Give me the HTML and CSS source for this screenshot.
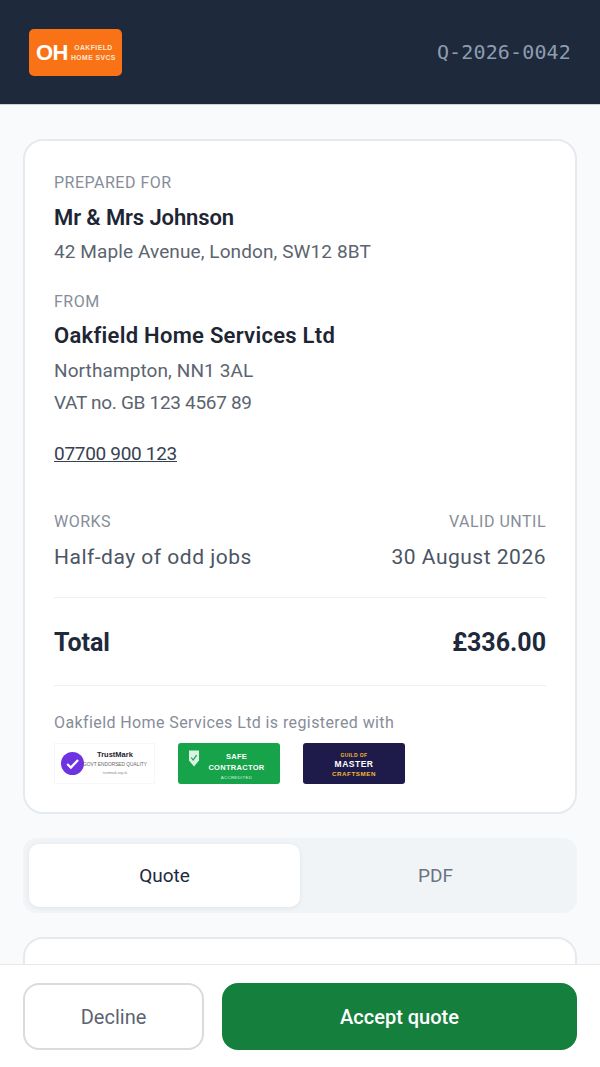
FILE: index.html
```html
<!DOCTYPE html>
<html lang="en">
<head>
  <meta charset="UTF-8" />
  <meta name="viewport" content="width=device-width, initial-scale=1.0"/>
  <title>Quote Q-2026-0042</title>
  <link rel="stylesheet" href="styles.css">
</head>
<body>

  <header class="topbar">
    <div class="logo">
      <span class="logo-mark">OH</span>
      <span class="logo-name">OAKFIELD<br>HOME SVCS</span>
    </div>
    <div class="quote-ref">Q-2026-0042</div>
  </header>

  <main class="content">
    <section class="card summary">
      <div class="label">PREPARED FOR</div>
      <div class="name">Mr &amp; Mrs Johnson</div>
      <div class="line">42 Maple Avenue, London, SW12 8BT</div>

      <div class="label from-label">FROM</div>
      <div class="name company">Oakfield Home Services Ltd</div>
      <div class="line">Northampton, NN1 3AL</div>
      <div class="line vat">VAT no. GB 123 4567 89</div>
      <a class="phone" href="tel:07700900123">07700 900 123</a>

      <div class="meta">
        <div>
          <div class="label">WORKS</div>
          <div class="meta-value">Half-day of odd jobs</div>
        </div>
        <div class="meta-right">
          <div class="label">VALID UNTIL</div>
          <div class="meta-value">30 August 2026</div>
        </div>
      </div>

      <div class="total">
        <span>Total</span>
        <span>£336.00</span>
      </div>

      <div class="registered">Oakfield Home Services Ltd is registered with</div>
      <div class="badges">
        <div class="badge trustmark">
          <svg class="tm-check" viewBox="0 0 24 24" width="23" height="23">
            <circle cx="12" cy="12" r="12" fill="#6d33e0"/>
            <path d="M6.5 12.5l3.8 3.8 7.5-8" fill="none" stroke="#fff" stroke-width="2.4"/>
          </svg>
          <div class="tm-text">
            <div class="tm-name">TrustMark</div>
            <div class="tm-sub">GOVT ENDORSED QUALITY</div>
            <div class="tm-url">trustmark.org.uk</div>
          </div>
        </div>
        <div class="badge safe">
          <svg class="safe-shield" viewBox="0 0 10 16" width="10" height="17">
            <path d="M0 0h10v10l-5 6-5-6z" fill="#d9f2e2"/>
            <path d="M2.2 7l2 2.6 3.4-5" fill="none" stroke="#16a34a" stroke-width="1.2"/>
          </svg>
          <div class="safe-text">
            <div>SAFE</div>
            <div>CONTRACTOR</div>
            <div class="safe-sub">ACCREDITED</div>
          </div>
        </div>
        <div class="badge guild">
          <div class="guild-top">GUILD OF</div>
          <div class="guild-mid">MASTER</div>
          <div class="guild-bot">CRAFTSMEN</div>
        </div>
      </div>
    </section>

    <div class="tabs">
      <button class="tab tab-active">Quote</button>
      <button class="tab">PDF</button>
    </div>

    <section class="card next-card"></section>
  </main>

  <footer class="actions">
    <button class="btn btn-decline">Decline</button>
    <button class="btn btn-accept">Accept quote</button>
  </footer>

</body>
</html>
```

FILE: styles.css
```css
* {
  box-sizing: border-box;
}

html, body {
  height: 100%;
}

body {
  margin: 0;
  display: flex;
  flex-direction: column;
  overflow: hidden;
  font-family: 'Roboto', 'Liberation Sans', sans-serif;
  background: #f8fafc;
  color: #1e293b;
}

.topbar {
  flex: none;
  height: 105px;
  padding: 0 29px;
  display: flex;
  align-items: center;
  justify-content: space-between;
  background: #1e293b;
  border-bottom: 1px solid #cbd5e1;
}

.logo {
  width: 93px;
  height: 47px;
  margin-top: 1px;
  padding-left: 7px;
  display: flex;
  align-items: center;
  gap: 3px;
  background: #f97316;
  border-radius: 5px;
  color: #fff;
  font-family: 'Liberation Sans', sans-serif;
  font-weight: bold;
}

.logo-mark {
  font-size: 22px;
  letter-spacing: -0.5px;
}

.logo-name {
  font-size: 6.8px;
  line-height: 9.5px;
  letter-spacing: 0.45px;
  text-align: center;
  color: #fde6d3;
}

.quote-ref {
  font-family: 'DejaVu Sans Mono', monospace;
  font-size: 20px;
  color: #8d9db1;
  letter-spacing: 0.15px;
}

.content {
  flex: 1;
  min-height: 0;
  overflow: hidden;
  padding: 34px 23px 0;
}

.card {
  background: #fff;
  border: 2px solid #e6e9ee;
  border-radius: 20px;
}

.summary {
  padding: 30px 29px 28px;
}

.label {
  font-size: 16px;
  line-height: 24px;
  color: #868d99;
  letter-spacing: 0.5px;
}

.from-label {
  margin-top: 23px;
}

.name {
  margin-top: 8px;
  margin-bottom: 4px;
  font-size: 22px;
  line-height: 30px;
  font-weight: 600;
  color: #1e2533;
  letter-spacing: -0.1px;
}

.company {
  margin-top: 7px;
  margin-bottom: 5px;
  letter-spacing: 0.28px;
}

.line {
  margin-top: 2px;
  font-size: 19px;
  line-height: 30px;
  color: #5b6470;
  letter-spacing: 0.1px;
}

.vat {
  letter-spacing: -0.3px;
}

.phone {
  display: block;
  margin-top: 21px;
  font-size: 19px;
  line-height: 30px;
  color: #374151;
  letter-spacing: -0.3px;
}

.meta {
  margin-top: 41px;
  padding-bottom: 26px;
  display: flex;
  justify-content: space-between;
  border-bottom: 1px solid #f0f1f4;
}

.meta-right {
  text-align: right;
}

.meta-value {
  margin-top: 9px;
  font-size: 21px;
  line-height: 28px;
  color: #4b5563;
  letter-spacing: 0.5px;
}

.total {
  height: 88px;
  padding-top: 1px;
  display: flex;
  align-items: center;
  justify-content: space-between;
  border-bottom: 1px solid #f0f1f4;
  font-size: 25px;
  font-weight: 700;
  color: #1e293b;
}

.registered {
  margin-top: 25px;
  font-size: 16px;
  line-height: 24px;
  color: #868d99;
  letter-spacing: 0.4px;
}

.badges {
  margin-top: 8px;
  display: flex;
  gap: 23px;
}

.badge {
  flex: none;
  height: 41px;
  border-radius: 3px;
  font-family: 'Liberation Sans', sans-serif;
}

.trustmark {
  width: 101px;
  padding-left: 6px;
  display: flex;
  align-items: center;
  border: 1px solid #f7f7f9;
  border-radius: 0;
}

.tm-check {
  flex: none;
}

.tm-text {
  text-align: center;
  margin-left: -1px;
}

.tm-name {
  font-size: 7.5px;
  line-height: 10px;
  font-weight: bold;
  color: #1f2430;
}

.tm-sub {
  font-size: 4.8px;
  line-height: 9px;
  color: #666;
  white-space: nowrap;
}

.tm-url {
  font-size: 3.4px;
  line-height: 8px;
  color: #888;
}

.safe {
  width: 102px;
  padding-left: 11px;
  display: flex;
  background: #16a34a;
  color: #fff;
  font-weight: bold;
}

.safe-shield {
  margin-top: 7px;
}

.safe-text {
  flex: 1;
  margin-top: 8px;
  padding-right: 6px;
  font-size: 7.5px;
  line-height: 11px;
  text-align: center;
  letter-spacing: 0.3px;
}

.safe-sub {
  font-size: 4.4px;
  line-height: 9px;
  font-weight: normal;
  color: #d9f2e2;
}

.guild {
  width: 102px;
  padding-top: 8px;
  background: #1e1b4b;
  text-align: center;
  font-weight: bold;
}

.guild-top {
  font-size: 5px;
  line-height: 8px;
  letter-spacing: 0.4px;
  color: #f5b82e;
}

.guild-mid {
  font-size: 8.5px;
  line-height: 11px;
  letter-spacing: 0.5px;
  color: #fff;
}

.guild-bot {
  font-size: 6.2px;
  line-height: 8px;
  letter-spacing: 0.6px;
  color: #f5b82e;
}

.tabs {
  margin-top: 24px;
  padding: 6px;
  height: 75px;
  display: flex;
  background: #f1f4f7;
  border-radius: 14px;
}

.tab {
  flex: 1;
  border: none;
  border-radius: 10px;
  background: transparent;
  font-family: inherit;
  font-size: 19px;
  font-weight: 400;
  color: #6b7280;
}

.tab-active {
  background: #fff;
  color: #1e293b;
  box-shadow: 0 1px 4px rgba(15, 23, 42, 0.08);
}

.next-card {
  margin-top: 24px;
  height: 200px;
}

.actions {
  flex: none;
  height: 103px;
  padding: 18px 23px 0;
  display: flex;
  gap: 18px;
  background: #fff;
  border-top: 1px solid #e5e7eb;
}

.btn {
  height: 67px;
  border-radius: 16px;
  font-family: inherit;
  font-size: 20px;
}

.btn-decline {
  width: 181px;
  flex: none;
  background: #fff;
  border: 2px solid #d9dbe0;
  color: #5b6470;
  font-weight: 400;
}

.btn-accept {
  flex: 1;
  background: #15803d;
  border: none;
  color: #fff;
  font-weight: 500;
}
```
